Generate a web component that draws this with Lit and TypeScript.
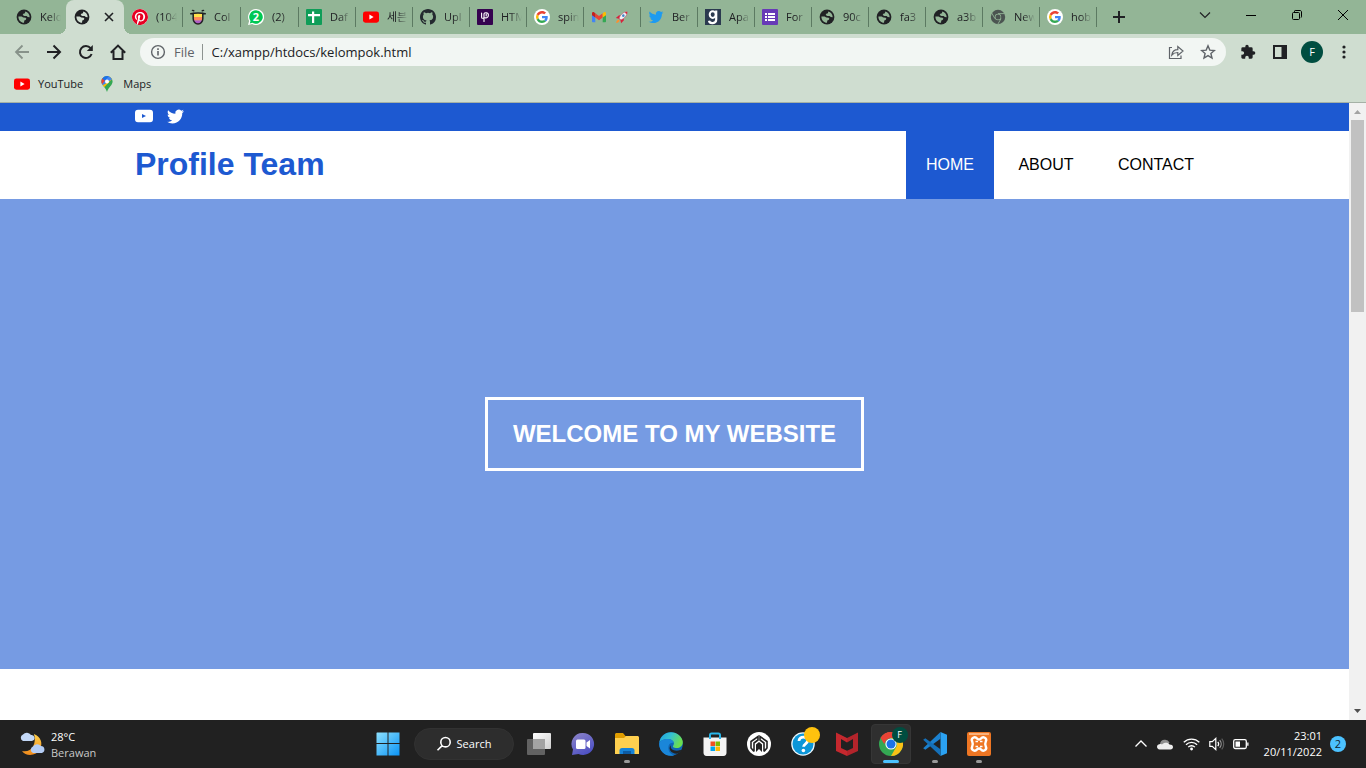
import { LitElement, html, svg, css, nothing, type TemplateResult } from "lit";
import { customElement } from "lit/decorators.js";

const icon = (size: number, box: string, body: unknown, cls = "") =>
  html`<svg class=${cls} width=${size} height=${size} viewBox=${box} aria-hidden="true">${body}</svg>`;

const globe = () => icon(16, "0 0 16 16", svg`
  <circle cx="8" cy="8" r="7.400" fill="#202124"/>
  <path fill="#93b596" d="M2.400 7.400 5.600 7.400 7.300 8.600 9.600 8.700 10.400 9.800 9.600 11 8.300 11.400 8 13.700C5 13.600 2.400 11.300 2.400 7.400ZM9.300 2.500C11.800 3 13.700 5.300 13.700 8.200L11.800 7.900 10.600 7 8.300 7.100 6.700 6.100 7.300 4.700 8.900 4.300Z" class="land"/>`);
const youtube = () => icon(16, "0 0 16 16", svg`
  <rect y="2.4" width="16" height="11.3" rx="2.4" fill="#f00"/><path d="M6.4 5.6v4.8L10.6 8z" fill="#fff"/>`);
const pinterest = () => icon(16, "0 0 24 24", svg`
  <circle cx="12" cy="12" r="12" fill="#fff"/>
  <path fill="#e60023" d="M12 0a12 12 0 0 0-4.37 23.17c-.1-.95-.2-2.4.04-3.44l1.4-5.96s-.35-.72-.35-1.78c0-1.67.97-2.91 2.17-2.91 1.02 0 1.52.77 1.52 1.69 0 1.03-.66 2.57-1 4-.28 1.2.6 2.17 1.78 2.17 2.13 0 3.77-2.25 3.77-5.5 0-2.87-2.06-4.88-5.01-4.88-3.41 0-5.42 2.56-5.42 5.2 0 1.04.4 2.14.9 2.74.1.12.1.23.08.35l-.34 1.36c-.05.22-.17.27-.4.16-1.5-.7-2.43-2.88-2.43-4.65 0-3.78 2.75-7.25 7.92-7.25 4.16 0 7.4 2.97 7.4 6.93 0 4.13-2.6 7.46-6.22 7.46-1.21 0-2.36-.63-2.75-1.38l-.75 2.85c-.27 1.04-1 2.35-1.5 3.15A12 12 0 1 0 12 0z"/>`);
const colorhunt = () => icon(16, "0 0 16 16", svg`
  <path d="M3.200 4h9.600v5.500a4.800 6 0 0 1-9.600 0z" fill="#ffe14a"/>
  <path d="M3.200 8h9.600v1.500l-.3 1.800h-9z" fill="#ff8a5c"/><path d="M3.500 11.200h9c-.8 2.500-2.600 4-4.500 4s-3.700-1.500-4.500-4z" fill="#b05fc7"/>
  <path d="M.8 4.800C4 3.800 12 3.800 15.200 4.800M3.200 4.300v5.400c0 3 2.200 5.400 4.800 5.400s4.800-2.400 4.800-5.400V4.300M2.500 1.400l1.200.4M13.500 1.400l-1.200.4" fill="none" stroke="#202124" stroke-width="1.500" stroke-linecap="round"/>`);
const whatsapp = () => html`<span class="wa">${icon(16, "0 0 16 16", svg`
  <path d="M8 0a8 8 0 1 1-3.800 15L0 16l1.100-4A8 8 0 0 1 8 0z" fill="#fff"/><path d="M8 1.200a6.800 6.800 0 1 1-3.600 12.600l-2.600.6.700-2.500A6.800 6.800 0 0 1 8 1.200z" fill="#00c853"/>`)}<b>2</b></span>`;
const sheets = () => icon(16, "0 0 16 16", svg`
  <rect width="16" height="16" rx="1" fill="#0f9d58"/><path d="M2 5h12v2.200H8.200V14H6V7.200H2zM6 2.400h2.200V5H6z" fill="#fff"/>`);
const github = () => icon(16, "0 0 16 16", svg`
  <path fill="#24292f" d="M8 0C3.58 0 0 3.58 0 8c0 3.54 2.29 6.53 5.47 7.59.4.07.55-.17.55-.38 0-.19-.01-.82-.01-1.49-2.01.37-2.53-.49-2.69-.94-.09-.23-.48-.94-.82-1.13-.28-.15-.68-.52-.01-.53.63-.01 1.08.58 1.23.82.72 1.21 1.87.87 2.33.66.07-.52.28-.87.51-1.07-1.78-.2-3.64-.89-3.64-3.95 0-.87.31-1.59.82-2.15-.08-.2-.36-1.02.08-2.12 0 0 .67-.21 2.2.82a7.6 7.6 0 0 1 4 0c1.53-1.04 2.2-.82 2.2-.82.44 1.1.16 1.92.08 2.12.51.56.82 1.27.82 2.15 0 3.07-1.87 3.75-3.65 3.95.29.25.54.73.54 1.48 0 1.07-.01 1.93-.01 2.2 0 .21.15.46.55.38A8.01 8.01 0 0 0 16 8c0-4.42-3.58-8-8-8z"/>`);
const purpleP = () => icon(16, "0 0 16 16", svg`
  <rect width="16" height="16" rx="1" fill="#35024f"/><path d="M4.600 4v4.200c0 1.400 1.500 1.400 2.400.4M7 12.400V5c0-1.800 4.400-2 4.400.9 0 2.400-1.700 3.400-3.400 2.800M9.200 5v2" fill="none" stroke="#fff" stroke-width="1.100" stroke-linecap="round"/>`);
const google = () => icon(16, "0 0 48 48", svg`
  <circle cx="24" cy="24" r="24" fill="#fff"/><g transform="translate(6 6) scale(.75)">
  <path fill="#ea4335" d="M24 9.5c3.54 0 6.71 1.22 9.21 3.6l6.85-6.85C35.9 2.38 30.47 0 24 0 14.62 0 6.51 5.38 2.56 13.22l7.98 6.19C12.43 13.72 17.74 9.5 24 9.5z"/>
  <path fill="#4285f4" d="M46.98 24.55c0-1.57-.15-3.09-.38-4.55H24v9.02h12.94c-.58 2.96-2.26 5.48-4.78 7.18l7.73 6c4.51-4.18 7.09-10.36 7.09-17.65z"/>
  <path fill="#fbbc05" d="M10.53 28.59a14.5 14.5 0 0 1 0-9.18l-7.98-6.19a24 24 0 0 0 0 21.56l7.98-6.19z"/>
  <path fill="#34a853" d="M24 48c6.48 0 11.93-2.13 15.89-5.81l-7.73-6c-2.15 1.45-4.92 2.3-8.16 2.3-6.26 0-11.57-4.22-13.47-9.91l-7.98 6.19C6.51 42.62 14.62 48 24 48z"/></g>`);
const gmail = () => icon(16, "0 0 16 16", svg`
  <path d="M1 4.400v7.800c0 .6.400 1 1 1h2.300V6.600z" fill="#4285f4"/><path d="M15 4.400v7.800c0 .6-.4 1-1 1h-2.300V6.600z" fill="#34a853"/>
  <path d="M4.300 4.200v4.400L8 11.300l3.700-2.700V4.200L8 7z" fill="#ea4335"/><path d="M1 4.400v1.800l3.300 2.400V4.200l-1-.8C2.300 2.700 1 3.300 1 4.400z" fill="#c5221f"/><path d="M15 4.400v1.800l-3.300 2.400V4.200l1-.8c1-.7 2.300-.1 2.300 1z" fill="#fbbc04"/>`);
const rocket = () => icon(13, "0 0 16 16", svg`
  <path d="M1 8.500 5 5.200 8.500 6 10.500 9 11 11.500 7.500 15 6.600 11 5 9.400z" fill="#d8223c"/><path d="M15 1C11 .8 7 4 5 8.800L7.300 11C12 9 15.200 5 15 1z" fill="#eef2f7" stroke="#b9435e" stroke-width=".7"/>
  <circle cx="10.300" cy="5.700" r="1.600" fill="#4387c7"/><path d="M12 1.700c1-.4 2-.7 3-.7 0 1-.2 2-.7 3z" fill="#d8223c"/><path d="M4.500 10.500c-2 .3-2.800 2-3.200 4.300 2.200-.4 4-1.200 4.300-3.200z" fill="#ff8f2d"/>`);
const birdPath = "M23.953 4.57a10 10 0 0 1-2.825.775 4.958 4.958 0 0 0 2.163-2.723c-.951.555-2.005.959-3.127 1.184a4.92 4.92 0 0 0-8.384 4.482C7.69 8.095 4.067 6.13 1.64 3.162a4.822 4.822 0 0 0-.666 2.475c0 1.71.87 3.213 2.188 4.096a4.904 4.904 0 0 1-2.228-.616v.06a4.923 4.923 0 0 0 3.946 4.827 4.996 4.996 0 0 1-2.212.085 4.936 4.936 0 0 0 4.604 3.417 9.867 9.867 0 0 1-6.102 2.105c-.39 0-.779-.023-1.17-.067a13.995 13.995 0 0 0 7.557 2.209c9.053 0 13.998-7.496 13.998-13.985 0-.21 0-.42-.015-.63A9.935 9.935 0 0 0 24 4.59z";
const bird = (size: number, fill: string, box = "0 0 24 24") => icon(size, box, svg`<path fill=${fill} d=${birdPath}/>`);
const goodreads = () => icon(16, "0 0 16 16", svg`
  <rect width="16" height="16" fill="#2b3a4f"/><ellipse cx="7.700" cy="5.600" rx="3" ry="3.300" fill="none" stroke="#fff" stroke-width="2"/>
  <path d="M11.200 1.500v9c0 4.600-6.500 4.500-7.200 1.300" fill="none" stroke="#fff" stroke-width="2.200"/>`);
const forms = () => icon(16, "0 0 16 16", svg`
  <rect width="16" height="16" rx="1" fill="#673ab7"/><path d="M3 4h2v2H3zm0 3h2v2H3zm0 3h2v2H3zm3-6h7v2H6zm0 3h7v2H6zm0 3h7v2H6z" fill="#fff"/>`);
const chromeGray = () => icon(16, "0 0 16 16", svg`
  <circle cx="8" cy="8" r="5.200" fill="none" stroke="#4b5451" stroke-width="4"/><circle cx="8" cy="8" r="2.500" fill="#4b5451"/>
  <path d="M8 4.600h6.600M5 9.700 1.700 4M11 9.700 7.700 15.400" stroke="#93b596" stroke-width=".9"/>`);

const tabs: { icon: () => TemplateResult; text?: string; mark?: () => TemplateResult; name: string; active?: boolean }[] = [
  { icon: globe, text: "Kelo", name: "Kelo" },
  { icon: globe, name: "kelompok.html", active: true },
  { icon: pinterest, text: "(104", name: "Pinterest" },
  { icon: colorhunt, text: "Col", name: "Color" },
  { icon: whatsapp, text: "(2)", name: "WhatsApp" },
  { icon: sheets, text: "Daf", name: "Daftar" },
  { icon: youtube, text: "세븐", name: "YouTube" },
  { icon: github, text: "Upl", name: "GitHub" },
  { icon: purpleP, text: "HTM", name: "HTML" },
  { icon: google, text: "spin", name: "Google" },
  { icon: gmail, mark: rocket, name: "Gmail" },
  { icon: () => bird(16, "#1d9bf0", "-1 -1 26 26"), text: "Ber", name: "Twitter" },
  { icon: goodreads, text: "Apa", name: "Goodreads" },
  { icon: forms, text: "For", name: "Forms" },
  { icon: globe, text: "90c", name: "90c" },
  { icon: globe, text: "fa3", name: "fa3" },
  { icon: globe, text: "a3b", name: "a3b" },
  { icon: chromeGray, text: "New", name: "New Tab" },
  { icon: google, text: "hob", name: "Google" },
];

const line = (d: string, stroke = "#202124", w = 2) => icon(16, "0 0 16 16", svg`<path d=${d} fill="none" stroke=${stroke} stroke-width=${w}/>`);

const taskIcons: { name: string; art: TemplateResult; state?: string }[] = [
  { name: "Task view", art: icon(24, "0 0 24 24", svg`
    <defs><linearGradient id="tv" x2="1" y2="1"><stop stop-color="#fff"/><stop offset="1" stop-color="#cfcfcf"/></linearGradient></defs>
    <rect x="6" y="1" width="18" height="16" rx="1" fill="url(#tv)"/><rect y="7" width="18" height="16" rx="1" fill="#696969" opacity=".9"/><path d="M6 7h12v10H6z" fill="#a3a3a3"/>`) },
  { name: "Chat", art: icon(24, "0 0 24 24", svg`
    <defs><linearGradient id="ch" x2=".6" y2="1"><stop stop-color="#8f86c9"/><stop offset="1" stop-color="#4e51c4"/></linearGradient></defs>
    <path d="M12 1a11 11 0 1 1-4.500 21L1 23l1-5.500A11 11 0 0 1 12 1z" fill="url(#ch)"/><rect x="5" y="7.500" width="9.500" height="9.500" rx="1.500" fill="#fff"/><path d="m15.500 10.500 3.500-2.500v8.500L15.500 14z" fill="#fff"/>`) },
  { name: "File Explorer", state: "open", art: icon(24, "0 0 24 24", svg`
    <path d="M0 2.500C0 1.700.7 1 1.500 1H8l2.500 3H22v5H0z" fill="#e09d00"/><path d="M0 6h9l2-2h11.500c.8 0 1.500.7 1.500 1.500V22H0z" fill="#ffd04f"/><path d="M4.500 22v-3.500c0-1.500 1-2.500 2.500-2.500h10c1.500 0 2.500 1 2.500 2.500V22z" fill="#1683d8"/><path d="M8 19h8v3H8z" fill="#0c5ba4"/>`) },
  { name: "Edge", art: icon(24, "0 0 24 24", svg`
    <defs><linearGradient id="ed" x2="1" y2=".4"><stop stop-color="#1b9de2"/><stop offset=".5" stop-color="#35c1d0"/><stop offset="1" stop-color="#6bdf4e"/></linearGradient></defs>
    <circle cx="12" cy="12" r="11.800" fill="#0f66b4"/><path d="M.3 11C1 4.500 6 .2 12 .2S23.800 5 23.800 10c0 4-3 6-6 6-3.500 0-4.500-1.500-3.500-2.500C16.500 10 13 7 9 7 4.500 7 1 9 .3 11z" fill="url(#ed)"/>
    <path d="M.2 12C.5 8.500 4.500 7 8.500 7c3 0 6 1.500 6.200 4C8 9 7 21 15 23.400 7 25.500.2 19.500.2 12z" fill="#1a86d9"/><path d="M12 13.200c-1.500 4 3.500 6.800 9.500 4.800l.8.300A9 9 0 0 1 19 21.600c-6 1-11-5-7-8.400z" fill="#222"/>`) },
  { name: "Store", art: icon(24, "0 0 24 24", svg`
    <path d="M7 7V3c0-1 .8-1.500 1.500-1.500h7c.8 0 1.500.5 1.500 1.500v4" fill="none" stroke="#29b6ea" stroke-width="2"/><path d="M.5 5.500h23v15c0 2-1 3.500-3 3.500h-17c-2 0-3-1.500-3-3.500z" fill="#f3f3f3"/><path d="M7 5v2M17 5v2" stroke="#29b6ea" stroke-width="2"/>
    <path d="M7.500 9.500H12V14H7.500z" fill="#f25022"/><path d="M12.500 9.500H17V14h-4.500z" fill="#7fba00"/><path d="M7.500 14.500H12V19H7.500z" fill="#00a4ef"/><path d="M12.500 14.500H17V19h-4.500z" fill="#ffb900"/>`) },
  { name: "Armoury", art: icon(24, "0 0 24 24", svg`
    <circle cx="12" cy="12" r="12" fill="#fff"/><g fill="none" stroke="#222" stroke-width="1.600"><path d="M7 19.500 4 16V9.500L11 4.500v3.500l-4 3v8.500"/><path d="M17 19.500 20 16V9.500L13 4.500v3.500l4 3v8.500"/></g>
    <path d="M9 20v-7.500l3-2.500 3 2.500V20l-3-3z" fill="#222"/>`) },
  { name: "Help", art: html`<span class="help">${icon(24, "0 0 24 24", svg`
    <circle cx="12" cy="12" r="11.800" fill="#eaf6fc"/><circle cx="12" cy="12" r="10.500" fill="#0c96d8"/><path d="M8 9c0-5.300 8.600-5 8.600-.4 0 3.400-4 3-4 6.200" fill="none" stroke="#fff" stroke-width="2.800"/><circle cx="12.400" cy="18.500" r="1.800" fill="#fff"/>`)}<i class="alert"></i></span>` },
  { name: "McAfee", art: icon(24, "0 0 24 24", svg`
    <path d="M1 .5V19l11 5V18.700L6 16V7l6 3.400V6z" fill="#c5282e"/><path d="M12 6 23 .5V19l-11 5v-5.300l6-2.700V7l-6 3.400z" fill="#b3242b"/>`) },
  { name: "Chrome", state: "current", art: html`<span class="chrome">${icon(24, "0 0 24 24", svg`
    <circle cx="12" cy="12" r="12" fill="#34a853"/><path d="M1.600 6A12 12 0 0 1 22.400 6H12a6 6 0 0 0-5.200 3z" fill="#ea4335"/><path d="M22.400 6A12 12 0 0 1 12 24l5.200-9A6 6 0 0 0 17.200 9L12 6z" fill="#fbc116"/><path d="M1.600 6 6.800 15 12 12 8 7z" fill="#34a853"/><path d="M1.600 6A12 12 0 0 1 12 0v6a6 6 0 0 0-5.200 3l-1.600 3z" fill="#ea4335"/>
    <circle cx="12" cy="12" r="5.600" fill="#fff"/><circle cx="12" cy="12" r="4.500" fill="#1a73e8"/>`)}<i class="who">F</i></span>` },
  { name: "VS Code", state: "open", art: icon(24, "0 0 24 24", svg`
    <path d="M17.500 0 24 2.800v18.400L17.500 24z" fill="#2ba2f2"/><path d="M17.500 0v6.800L2.300 17.800.2 16.200z" fill="#1b81cf"/><path d="M.2 7.800 2.300 6.200 17.500 17.200V24z" fill="#1570b8"/>`) },
  { name: "XAMPP", state: "open", art: icon(24, "0 0 24 24", svg`
    <rect width="24" height="24" rx="2" fill="#ee7623"/><path d="M2 2h20" stroke="#f9b27d" stroke-width="2"/><path d="M5.200 9.500C3.500 6 8 4 10 6.500c1 1.300 3 1.300 4 0 2-2.500 6.500-.5 4.800 3-.7 1.500-.7 3.500 0 5 1.700 3.500-2.800 5.500-4.800 3-1-1.300-3-1.300-4 0-2 2.500-6.500.5-4.800-3 .7-1.500.7-3.500 0-5z" fill="none" stroke="#fff" stroke-width="2.400"/><path d="M8.500 9.500h2.500M13 9.500h2.500M8.500 14.500h2.500M13 14.500h2.500" stroke="#fff" stroke-width="1.600"/>`) },
];

@customElement("app-root")
export class AppRoot extends LitElement {
  static styles = css`
    :host { display: flex; flex-direction: column; min-height: 100vh; font: 11px/16px "Open Sans", "Noto Sans CJK KR", sans-serif; color: #202124; }
    * { box-sizing: border-box; }
    button { font: inherit; color: inherit; background: none; border: 0; padding: 0; margin: 0; display: flex; align-items: center; justify-content: center; }
    a { color: inherit; text-decoration: none; }
    svg { display: block; flex: none; }
    h1, h2 { margin: 0; }

    .strip { display: flex; height: 34px; background: #93b596; padding-left: 8px; }
    .tabs { display: grid; grid-template-columns: repeat(5, 58px) repeat(14, 57px); }
    .tab { justify-content: flex-start; gap: 8px; padding: 0 2px 0 8px; border-radius: 8px 8px 0 0; position: relative; min-width: 0; }
    .tab::after { content: ""; position: absolute; right: -1px; top: 7px; width: 1px; height: 20px; background: #5c7a62; }
    .tab:first-child::after, .tab.active::after { display: none; }
    .tab.active { background: #cfddd0; justify-content: space-between; padding-right: 7px; }
    .tab.active .land { fill: #cfddd0; }
    .tab.active::before { content: ""; position: absolute; bottom: 0; left: -8px; right: -8px; height: 8px;
      background: radial-gradient(circle at 0 0, #0000 8px, #cfddd0 8px) left / 8px 8px no-repeat,
        radial-gradient(circle at 100% 0, #0000 8px, #cfddd0 8px) right / 8px 8px no-repeat; }
    .label { flex: 1; overflow: hidden; white-space: nowrap; text-align: left; mask-image: linear-gradient(90deg, #000 9px, #0000 21px); }
    .wa { position: relative; }
    .wa b { position: absolute; inset: 0; color: #fff; text-align: center; }
    .plus { width: 28px; margin-left: 9px; }
    .window { display: flex; margin-left: auto; height: 29px; }
    .window button { width: 46px; }

    .toolbar { display: flex; align-items: center; height: 36px; padding: 0 6px; background: #cfddd0; }
    .tool { width: 32px; height: 28px; }
    .omnibox { flex: 1; display: flex; align-items: center; height: 28px; margin: 0 6px; padding: 0 2px 0 10px; border-radius: 14px; background: #f2f6f3; color: #5f6368; }
    .scheme { padding: 0 7px 0 8px; font-size: 13px; }
    .rule { width: 1px; height: 16px; background: #8d9390; }
    .url { flex: 1; min-width: 0; border: 0; background: none; outline: 0; padding: 0 0 0 9px; font: 13px/20px "Open Sans", sans-serif; color: #202124; }
    .avatar { width: 22px; height: 22px; border-radius: 50%; background: #004d40; color: #fff; line-height: 22px; text-align: center; }
    .bookmarks { display: flex; align-items: center; gap: 16px; height: 33px; padding: 0 14px 4px; background: #cfddd0; border-bottom: 1px solid #a5b1a6; }
    .bookmarks a { display: flex; gap: 8px; }

    .view { flex: 1; display: flex; min-height: 0; background: #fff; }
    .page { flex: 1; font: 16px/20px "Liberation Sans", Arial, sans-serif; color: #000; }
    .inner { width: 80%; margin: 0 auto; display: flex; align-items: center; }
    .social { background: #1d59d1; }
    .social .inner { height: 28px; gap: 14px; padding-bottom: 2px; }
    .masthead .inner { justify-content: space-between; }
    .masthead h1 { font-size: 32px; line-height: 36px; color: #1d59d1; padding-bottom: 2px; }
    .nav { white-space: nowrap; }
    .nav a { display: inline-block; padding: 24px 20px; vertical-align: top; }
    .nav a.here { background: #1d59d1; color: #fff; }
    .hero { display: flex; align-items: center; justify-content: center; height: 470px; background: #769be3; }
    .hero h2 { border: 3px solid #fff; padding: 20px 25px; font-size: 24px; line-height: 28px; color: #fff; }

    .scroll { width: 17px; display: flex; flex-direction: column; background: #f1f1f1; }
    .scroll button { height: 17px; }
    .track { flex: 1; padding: 0 2px; }
    .thumb { height: 33%; background: #c1c1c1; }

    .taskbar { display: grid; grid-template-columns: 1fr auto 1fr; align-items: center; height: 48px; background: #212121; color: #fff; }
    .weather { justify-self: start; margin-left: 19px; gap: 6px; text-align: left; padding-top: 2px; }
    .weather small { display: block; font-size: 11px; color: #c8c8c8; }
    .apps { display: flex; align-items: center; }
    .app { width: 44px; height: 48px; position: relative; }
    .app.open::after, .app.current::after { content: ""; position: absolute; bottom: 5px; width: 6px; height: 3px; border-radius: 2px; background: #9a9a9a; }
    .app.current::after { width: 16px; background: #4cc2ff; }
    .app.current::before { content: ""; position: absolute; inset: 4px 2px; border-radius: 4px; background: #2f2f2f; border: 1px solid #363636; }
    .search { width: 100px; height: 32px; margin: 0 3px 0 4px; gap: 5px; border-radius: 16px; background: #2d2d2d; border: 1px solid #323232; }
    .help, .chrome { position: relative; }
    .alert { position: absolute; top: -5px; right: -5px; width: 16px; height: 16px; border-radius: 50%; background: #ffc20e; }
    .who { position: absolute; top: -5px; right: -5px; width: 16px; height: 16px; border-radius: 50%; background: #004d40; font: 9px/16px "Open Sans", sans-serif; text-align: center; }
    .tray { display: flex; align-items: center; justify-self: end; gap: 8px; margin-right: 20px; }
    .clock { display: block; text-align: right; margin-left: 7px; }
    .badge { width: 16px; height: 16px; border-radius: 50%; background: #4cc2ff; color: #10222d; text-align: center; }
  `;

  render() {
    return html`
      <header>
        <div class="strip">
          <div class="tabs" role="tablist">
            ${tabs.map((t) => html`<button class="tab ${t.active ? "active" : ""}" role="tab" aria-label=${t.name} aria-selected=${t.active ? "true" : "false"}>
              ${t.icon()}
              ${t.active ? line("m4 4 8 8m0-8-8 8", "#202124", 1.6) : nothing}
              ${t.mark ? t.mark() : nothing}
              ${t.text ? html`<span class="label">${t.text}</span>` : nothing}
            </button>`)}
          </div>
          <button class="plus" aria-label="New tab">${line("M8 2v12M2 8h12")}</button>
          <div class="window">
            <button aria-label="Search tabs">${line("m3 5.500 5 5 5-5", "#202124", 1.2)}</button>
            <button aria-label="Minimize">${line("M3 8.500h10", "#000", 1)}</button>
            <button aria-label="Restore">${line("M5.500 5.500V4.200c0-.4.300-.7.700-.7h4.800c.9 0 1.500.6 1.500 1.500v4.800c0 .4-.3.700-.7.700M4.500 5.500h5c.6 0 1 .4 1 1v5c0 .6-.4 1-1 1h-5c-.6 0-1-.4-1-1v-5c0-.6.4-1 1-1z", "#000", 1)}</button>
            <button aria-label="Close">${line("m3 3 10 10m0-10L3 13", "#000", 1)}</button>
          </div>
        </div>
        <div class="toolbar">
          <button class="tool" aria-label="Back">${line("M15 8H2.500M8.500 1.500 2 8l6.500 6.500", "#87928a", 1.8)}</button>
          <button class="tool" aria-label="Forward">${line("M1 8h12.500M7.500 1.500 14 8l-6.500 6.500")}</button>
          <button class="tool" aria-label="Reload">${icon(16, "0 0 16 16", svg`<path d="M13.600 10A6 6 0 1 1 12.600 4.200" fill="none" stroke="#202124" stroke-width="2"/><path d="M14.800 1v6H8.800z" fill="#202124"/>`)}</button>
          <button class="tool" aria-label="Home">${line("M.8 8.800 8 1.600l7.200 7.200M3.500 7v8h9V7")}</button>
          <div class="omnibox">
            ${icon(16, "0 0 16 16", svg`<circle cx="8" cy="8" r="6.400" fill="none" stroke="#5f6368" stroke-width="1.400"/><path d="M8 7v4.500M8 4.300v1.600" stroke="#5f6368" stroke-width="1.600"/>`)}
            <label class="scheme" for="url">File</label><span class="rule"></span>
            <input class="url" id="url" .value=${"C:/xampp/htdocs/kelompok.html"} />
            <button class="tool" aria-label="Share">${line("M4 3.500H1.500v11h11.500V11.500M3.800 11c.5-3.500 2.700-5.300 6-5.300V2.500l5.200 4.500-5.200 4.500V8.500c-2.600 0-4.500.7-6 2.500z", "#5f6368", 1.2)}</button>
            <button class="tool" aria-label="Bookmark">${line("m8 1.800 1.800 4.300 4.600.4-3.500 3 1.100 4.600L8 11.600l-4 2.500 1.100-4.600-3.500-3 4.600-.4z", "#5f6368", 1.4)}</button>
          </div>
          <button class="tool" aria-label="Extensions">${icon(16, "0 0 24 24", svg`<path fill="#202124" d="M20.500 11H19V7a2 2 0 0 0-2-2h-4V3.500a2.500 2.500 0 0 0-5 0V5H4a2 2 0 0 0-2 2v3.800h1.500a2.700 2.700 0 0 1 0 5.400H2V20c0 1.100.9 2 2 2h3.800v-1.500a2.700 2.700 0 0 1 5.400 0V22H17a2 2 0 0 0 2-2v-4h1.500a2.500 2.500 0 0 0 0-5z"/>`)}</button>
          <button class="tool" aria-label="Side panel">${icon(16, "0 0 16 16", svg`<path fill="#202124" fill-rule="evenodd" d="M1 1h14v14H1zm2 2v10h6.500V3z"/>`)}</button>
          <button class="tool" aria-label="Profile"><span class="avatar">F</span></button>
          <button class="tool" aria-label="Menu">${icon(16, "0 0 16 16", svg`<g fill="#202124"><circle cx="8" cy="3" r="1.600"/><circle cx="8" cy="8" r="1.600"/><circle cx="8" cy="13" r="1.600"/></g>`)}</button>
        </div>
        <nav class="bookmarks">
          <a href="#youtube">${youtube()}YouTube</a>
          <a href="#maps">${icon(16, "0 0 16 16", svg`
            <defs><clipPath id="pin"><path d="M8 0a5.600 5.600 0 0 1 5.600 5.600C13.600 9.500 9.500 11 8 16 6.500 11 2.400 9.500 2.400 5.600A5.600 5.600 0 0 1 8 0z"/></clipPath></defs>
            <g clip-path="url(#pin)"><path d="M0 0h16v16H0z" fill="#34a853"/><path d="M0 13V0h16L4.500 12z" fill="#fbbc04"/><path d="M0 9V0h16L12.500 3.500 6 8 3 9.500z" fill="#4285f4"/><path d="M0 2h3.700l2.600 2.200L2.500 9H0z" fill="#ea4335"/><path d="M3.500 0 3 2.400l3 2.300L10 0z" fill="#1a73e8"/></g><circle cx="8" cy="5.600" r="2" fill="#fff"/>`)}Maps</a>
        </nav>
      </header>

      <div class="view">
        <main class="page">
          <div class="social"><div class="inner">
            <a href="#youtube" aria-label="YouTube">${icon(18, "0 0 18 18", svg`<path fill="#fff" fill-rule="evenodd" d="M3 2.800h12c2 0 3 1 3 3v6.400c0 2-1 3-3 3H3c-2 0-3-1-3-3V5.800c0-2 1-3 3-3zm4 4.200v4l4-2z"/>`)}</a>
            <a href="#twitter" aria-label="Twitter">${bird(17, "#fff")}</a>
          </div></div>
          <div class="masthead"><div class="inner">
            <h1>Profile Team</h1>
            <nav class="nav"><a class="here" href="#home">HOME</a> <a href="#about">ABOUT</a> <a href="#contact">CONTACT</a></nav>
          </div></div>
          <section class="hero"><h2>WELCOME TO MY WEBSITE</h2></section>
        </main>
        <div class="scroll">
          <button aria-label="Scroll up">${icon(17, "0 0 17 17", svg`<path d="M5 11h7L8.500 7z" fill="#a3a3a3"/>`)}</button>
          <div class="track"><div class="thumb"></div></div>
          <button aria-label="Scroll down">${icon(17, "0 0 17 17", svg`<path d="M5 6h7l-3.500 4z" fill="#505050"/>`)}</button>
        </div>
      </div>

      <footer class="taskbar">
        <button class="weather">
          ${icon(26, "0 0 26 26", svg`<defs><linearGradient id="mo" x2="0" y2="1"><stop stop-color="#ffd04a"/><stop offset="1" stop-color="#f08a1c"/></linearGradient></defs>
            <path d="M15 2c7 3 9 9 6 15-3 7-14 8-18 2 9 2 15-6 12-17z" fill="url(#mo)"/>
            <path d="M4 9a3.500 3.500 0 0 1 0-6.500A5 5 0 0 1 12 3a3 3 0 0 1 1 6z" fill="#c3d8f7"/><path d="M14 21a3.500 3.500 0 0 1 0-6.500 5 5 0 0 1 8-.5 3.600 3.600 0 0 1 1 7z" fill="#b4cdf5"/>`)}
          <span>28°C<small>Berawan</small></span>
        </button>
        <div class="apps">
          <button class="app" aria-label="Start">${icon(24, "0 0 24 24", svg`<defs><linearGradient id="wi" x2="1" y2="1"><stop stop-color="#8de1ff"/><stop offset="1" stop-color="#0a93f5"/></linearGradient></defs>
            <path d="M1 .5h10.500V11H.5V1zM12.500.5h11V11h-11zM.5 12h11v11.500H.5zM12.500 12h11v11.500h-11z" fill="url(#wi)"/>`)}</button>
          <button class="search">${line("M9.500 1.500a4.700 4.700 0 1 1 0 9.400 4.700 4.700 0 0 1 0-9.400zM6.200 9.600 1.500 14.300", "#fff", 1.6)}Search</button>
          ${taskIcons.map((t) => html`<button class="app ${t.state ?? ""}" aria-label=${t.name}>${t.art}</button>`)}
        </div>
        <div class="tray">
          ${line("m2.500 10.500 5.500-5.500 5.500 5.500", "#fff", 1.3)}
          ${icon(16, "0 0 16 16", svg`<path d="M3 8.500A5 5 0 0 1 12.500 6.500l-3 4z" fill="#8e8e8e"/><path d="M0 10.800C0 8.500 3 7.500 5 8.500c2-2.500 6-2.500 7.500 0 2 0 3.500.8 3.500 2.500 0 1.400-1 2.400-2.500 2.400h-11C1 13.400 0 12.200 0 10.800z" fill="#ededed"/>`)}
          ${icon(20, "0 0 18 18", svg`<g fill="none" stroke="#fff" stroke-width="1.200"><path d="M2.500 7.500a10 10 0 0 1 14 0M4.500 9.700a7 7 0 0 1 10 0M6.500 11.800a4.200 4.200 0 0 1 6 0"/></g><circle cx="9.500" cy="13.500" r="1.300" fill="#fff"/>`)}
          ${icon(16, "0 0 16 16", svg`<g fill="none" stroke-width="1.200"><path stroke="#fff" d="M.8 5.700h2.500l3.500-3.300v11.200l-3.500-3.300H.8zM8.800 5.800a3.500 3.500 0 0 1 0 4.400"/><path stroke="#9a9a9a" d="M10.700 4.200a5.700 5.700 0 0 1 0 7.600"/><path stroke="#5e5e5e" d="M12.700 2.700a8 8 0 0 1 0 10.600"/></g>`)}
          ${icon(16, "0 0 16 16", svg`<rect x=".7" y="3.700" width="12.600" height="8.800" rx="1.500" fill="none" stroke="#fff" stroke-width="1.300"/><path d="M2.500 5.500H7v5.200H2.500zM14.200 6.500h1.300v3.200h-1.300z" fill="#fff"/>`)}
          <time class="clock">23:01<br />20/11/2022</time>
          <span class="badge">2</span>
        </div>
      </footer>
    `;
  }
}
